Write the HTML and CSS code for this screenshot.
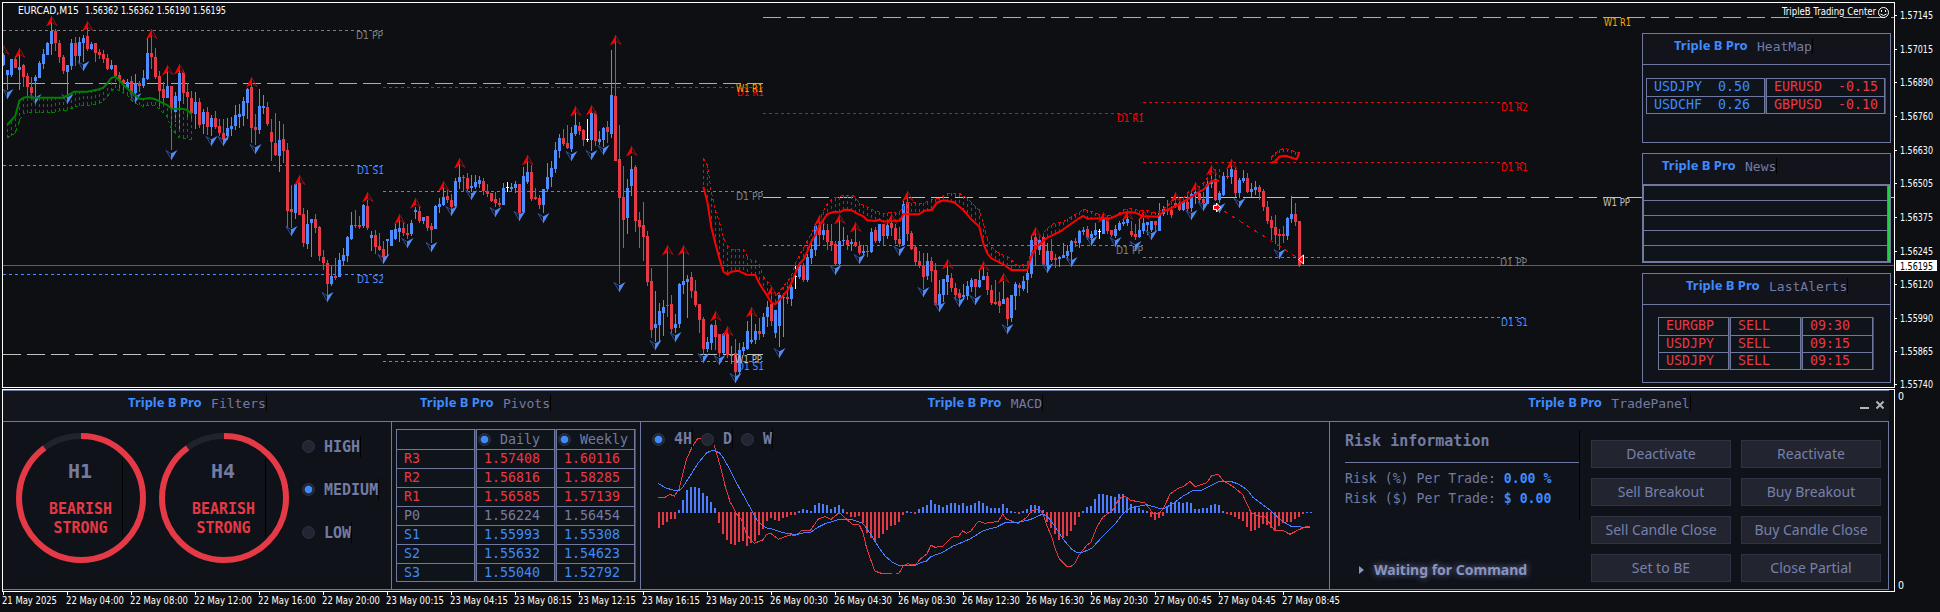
FILE: index.html
```html
<!DOCTYPE html>
<html lang="en">
<head>
  <meta charset="UTF-8" />
  <meta name="viewport" content="width=device-width, initial-scale=1.0">
  <title>TripleB Trading Center</title>
  <link rel="stylesheet" href="styles.css">
</head>
<body>

  <div class="chart-window">
    <svg id="priceChart" class="price-chart" width="1940" height="388"></svg>

    <div class="widgets">
      <div class="widget">
        <div class="widget-title heatmap-title"><b>Triple B Pro</b><span>HeatMap</span></div>
        <div class="grid heatmap">
          <div class="col blue"><div>USDJPY  0.50</div><div>USDCHF  0.26</div></div>
          <div class="col red"><div>EURUSD  -0.15</div><div>GBPUSD  -0.10</div></div>
        </div>
      </div>

      <div class="widget">
        <div class="widget-title news-title"><b>Triple B Pro</b><span>News</span></div>
        <div class="news"><div></div><div></div><div></div><div></div><div></div></div>
      </div>

      <div class="widget">
        <div class="widget-title alerts-title"><b>Triple B Pro</b><span>LastAlerts</span></div>
        <div class="grid alerts">
          <div class="col red"><div>EURGBP</div><div>USDJPY</div><div>USDJPY</div></div>
          <div class="col red"><div>SELL</div><div>SELL</div><div>SELL</div></div>
          <div class="col red"><div>09:30</div><div>09:15</div><div>09:15</div></div>
        </div>
      </div>
    </div>
  </div>

  <div class="lower">
    <div class="sub-window">
      <section class="panel filters">
        <h2><b>Triple B Pro</b><span>Filters</span></h2>
        <div class="panel-body">
          <div class="gauge">
            <svg width="130" height="130" viewBox="0 0 130 130">
              <circle class="track" cx="65" cy="65" r="62" />
              <circle class="value" cx="65" cy="65" r="62" pathLength="100" stroke-dasharray="90 10" transform="rotate(-90 65 65)" />
            </svg>
            <div class="gauge-text"><strong>H1</strong><p>BEARISH<br>STRONG</p></div>
          </div>
          <div class="gauge">
            <svg width="130" height="130" viewBox="0 0 130 130">
              <circle class="track" cx="65" cy="65" r="62" />
              <circle class="value" cx="65" cy="65" r="62" pathLength="100" stroke-dasharray="90 10" transform="rotate(-90 65 65)" />
            </svg>
            <div class="gauge-text"><strong>H4</strong><p>BEARISH<br>STRONG</p></div>
          </div>
          <div class="levels">
            <label class="choice"><i class="radio"></i><span>HIGH</span></label>
            <label class="choice"><i class="radio on"></i><span>MEDIUM</span></label>
            <label class="choice"><i class="radio"></i><span>LOW</span></label>
          </div>
        </div>
      </section>

      <section class="panel pivots">
        <h2><b>Triple B Pro</b><span>Pivots</span></h2>
        <div class="panel-body">
          <div class="grid pivot-table">
            <div class="col">
              <div></div>
              <div class="red">R3</div><div class="red">R2</div><div class="red">R1</div>
              <div>P0</div>
              <div class="blue">S1</div><div class="blue">S2</div><div class="blue">S3</div>
            </div>
            <div class="col">
              <div class="head"><i class="radio on"></i>Daily</div>
              <div class="red">1.57408</div><div class="red">1.56816</div><div class="red">1.56585</div>
              <div>1.56224</div>
              <div class="blue">1.55993</div><div class="blue">1.55632</div><div class="blue">1.55040</div>
            </div>
            <div class="col">
              <div class="head"><i class="radio on"></i>Weekly</div>
              <div class="red">1.60116</div><div class="red">1.58285</div><div class="red">1.57139</div>
              <div>1.56454</div>
              <div class="blue">1.55308</div><div class="blue">1.54623</div><div class="blue">1.52792</div>
            </div>
          </div>
        </div>
      </section>

      <section class="panel macd">
        <h2><b>Triple B Pro</b><span>MACD</span></h2>
        <div class="panel-body">
          <svg id="macdChart" width="688" height="167" viewBox="641 422 688 167"></svg>
          <div class="periods">
            <label class="choice"><i class="radio on"></i><span>4H</span></label>
            <label class="choice"><i class="radio"></i><span>D</span></label>
            <label class="choice"><i class="radio"></i><span>W</span></label>
          </div>
        </div>
      </section>

      <section class="panel trade">
        <h2><b>Triple B Pro</b><span>TradePanel</span>
          <svg class="window-buttons" width="26" height="12" viewBox="0 0 26 12">
            <path d="M0 9h9M16.500 2.500l7 7M23.500 2.500l-7 7" />
          </svg>
        </h2>
        <div class="panel-body">
          <div class="risk">
            <div class="risk-box">
              <h3>Risk information</h3>
              <p>Risk (%) Per Trade: <b>0.00 %</b></p>
              <p>Risk ($) Per Trade: <b>$ 0.00</b></p>
            </div>
            <div class="status"><i></i>Waiting for Command</div>
          </div>
          <div class="actions">
            <button>Deactivate</button><button>Reactivate</button>
            <button>Sell Breakout</button><button>Buy Breakout</button>
            <button>Sell Candle Close</button><button>Buy Candle Close</button>
            <button>Set to BE</button><button>Close Partial</button>
          </div>
        </div>
      </section>
    </div>
    <div class="sub-scale"><span>0</span><span>0</span></div>
  </div>

  <svg id="timeAxis" class="time-axis" width="1940" height="20"></svg>

  <script src="chart.js"></script>
</body>
</html>
```
FILE: styles.css
```css
* {
  box-sizing: border-box;
}

body {
  margin: 0;
  width: 1940px;
  height: 612px;
  overflow: hidden;
  background-color: #0e0f13;
  color: #737ba3;
  font-family: "Noto Sans", "Open Sans", sans-serif;
}

svg {
  display: block;
}

.red {
  color: #e63946;
}

.blue {
  color: #3d8bfd;
}

/* main chart */
.chart-window {
  position: relative;
  height: 389px;
}

.price-chart {
  overflow: visible;
}

.price-chart text,
.time-axis text {
  font-family: "DejaVu Sans Condensed", "DejaVu Sans", sans-serif;
  font-size: 10.5px;
}

.widgets {
  position: absolute;
  top: 33px;
  left: 1642px;
  width: 249px;
  display: flex;
  flex-direction: column;
  gap: 10px;
}

.widget {
  height: 110px;
  border: 1px solid #7078a0;
  background-color: #11131a;
}

.widget-title {
  display: flex;
  align-items: flex-start;
  height: 31px;
  padding-top: 3px;
  border-bottom: 1px solid #7078a0;
  background-color: #12131b;
}

.heatmap-title {
  padding-left: 31px;
}

.news-title {
  padding-left: 19px;
}

.alerts-title {
  padding-left: 43px;
}

.widget-title b,
.panel h2 b {
  width: 83px;
  font-size: 13px;
  font-weight: 700;
  line-height: 17px;
  color: #3d8bfd;
}

.widget-title span,
.panel h2 span {
  height: 16px;
  margin-top: 1px;
  border-right: 1px solid #000;
  font-family: "DejaVu Sans Mono", monospace;
  font-size: 13px;
  font-weight: 400;
  line-height: 17px;
}

/* tables made of separate bordered columns */
.grid {
  display: flex;
  gap: 1px;
  font-family: "DejaVu Sans Mono", monospace;
  font-size: 13.3px;
}

.col {
  border: 1px solid #7078a0;
  box-shadow: 1px 0 0 #1d6b34;
  background-color: #0f131a;
}

.col div {
  height: 17px;
  padding-left: 7px;
  line-height: 16px;
  white-space: pre;
}

.col div + div {
  border-top: 1px solid #7078a0;
}

.heatmap {
  margin: 13px 0 0 3px;
}

.heatmap .col {
  width: 119px;
}

.alerts {
  margin: 12px 0 0 15px;
}

.alerts .col {
  width: 71px;
}

.news {
  margin-top: 0;
  width: 247px;
  border: 1px solid #7078a0;
  border-right: 2px solid #1fd43a;
  background-color: #0f131a;
}

.news div {
  height: 15px;
  border-bottom: 1px solid #7078a0;
  border-right: 1px solid #7078a0;
}

.news div:last-child {
  border-bottom: none;
}

/* indicator window */
.lower {
  display: flex;
  height: 203px;
}

.sub-window {
  display: flex;
  width: 1893px;
  margin-left: 2px;
  border: 1px solid #fff;
}

.sub-scale {
  display: flex;
  flex-direction: column;
  justify-content: space-between;
  padding: 1px 0 0 3px;
  font-family: "DejaVu Sans Condensed", "DejaVu Sans", sans-serif;
  font-size: 10.5px;
  line-height: 13px;
  color: #fff;
}

.panel {
  height: 200px;
  border-top: 1px solid #7078a0;
  background-color: #0f1219;
}

.panel h2 {
  position: relative;
  display: flex;
  justify-content: center;
  height: 31px;
  margin: 0;
  padding-top: 3px;
  border-bottom: 1px solid #7078a0;
  background-color: #12151c;
}

.panel-body {
  display: flex;
  height: 168px;
  border-right: 1px solid #7078a0;
  border-bottom: 1px solid #7078a0;
}

.filters {
  width: 389px;
}

.pivots {
  width: 249px;
}

.macd {
  width: 689px;
}

.trade {
  width: 559px;
}

.pivots h2 {
  justify-content: flex-start;
  padding-left: 28px;
}

/* filters */
.filters .panel-body {
  padding: 11px 0 0 13px;
}

.gauge {
  position: relative;
  margin-right: 13px;
}

.gauge circle {
  fill: none;
  stroke-width: 6;
}

.gauge .track {
  stroke: #20232d;
}

.gauge .value {
  stroke: #e63946;
}

.gauge-text {
  position: absolute;
  top: 26px;
  left: 22px;
  width: 85px;
  height: 78px;
  border-right: 1px solid #000;
  text-align: center;
  font-family: "DejaVu Sans Mono", monospace;
  font-weight: 700;
}

.gauge-text strong {
  display: block;
  font-size: 20px;
  line-height: 24px;
}

.gauge-text p {
  margin: 17px 0 0 1px;
  color: #e63946;
  font-size: 15px;
  line-height: 19px;
}

.levels {
  display: flex;
  flex-direction: column;
  gap: 23px;
  margin-top: 3px;
}

.choice {
  display: flex;
  align-items: center;
  height: 20px;
  font-family: "DejaVu Sans Mono", monospace;
  font-size: 15px;
  font-weight: 700;
}

.choice span {
  margin-left: 9px;
  border-right: 1px solid #000;
  line-height: 20px;
}

.levels .choice span {
  padding-top: 1px;
}

.radio {
  display: inline-block;
  width: 13px;
  height: 13px;
  border: 1px solid #2e3242;
  border-radius: 50%;
  background-color: #232632;
}

.radio.on {
  background-image: radial-gradient(circle, #3d8bfd 3.4px, transparent 4.2px);
}

/* pivots */
.pivot-table {
  margin: 7px 0 0 4px;
  height: 153px;
}

.pivot-table .col {
  width: 79px;
}

.pivot-table .col div {
  height: 19px;
  line-height: 17px;
}

.pivot-table .col .head {
  display: flex;
  align-items: center;
  gap: 9px;
  padding-left: 1px;
}

/* macd */
.macd .panel-body {
  position: relative;
}

.periods {
  position: absolute;
  top: 7px;
  left: 11px;
  display: flex;
  gap: 8px;
}

/* trade panel */
.window-buttons {
  position: absolute;
  top: 8px;
  right: 3px;
  fill: none;
  stroke: #b5b5b5;
  stroke-width: 2;
}

.risk {
  width: 261px;
  padding: 8px 0 0 15px;
}

.risk-box {
  width: 235px;
  height: 90px;
  border-right: 1px solid #000;
  font-family: "DejaVu Sans Mono", monospace;
}

.risk h3 {
  height: 33px;
  margin: 0 0 6px;
  border-bottom: 1px solid #7078a0;
  font-size: 15px;
  line-height: 22px;
}

.risk p {
  margin: 0;
  font-size: 13.2px;
  line-height: 20px;
}

.risk p b {
  color: #3d8bfd;
}

.status {
  display: flex;
  align-items: center;
  margin: 38px 0 0 14px;
  color: #8b93bf;
  font-size: 14px;
  font-weight: 700;
  line-height: 24px;
  text-shadow: 0 0 7px #7078a0;
}

.status i {
  margin-right: 10px;
  border: 4px solid transparent;
  border-left: 5px solid #8b93bf;
  border-right: none;
}

.actions {
  display: grid;
  grid-template-columns: 140px 140px;
  grid-auto-rows: 28px;
  gap: 10px;
  padding-top: 18px;
}

.actions button {
  padding: 0 0 2px;
  border: 1px solid #2e3242;
  background-color: #22252f;
  color: #7780ab;
  font-family: "Noto Sans", "Open Sans", sans-serif;
  font-size: 14px;
}
```
FILE: chart.js
```js
const SVG_NS = "http://www.w3.org/2000/svg";

const BLUE = "#4d8dff";
const RED = "#e63946";

function add(parent, tag, attrs, text) {
  const el = document.createElementNS(SVG_NS, tag);
  for (const key in attrs) el.setAttribute(key, attrs[key]);
  if (text) el.textContent = text;
  parent.appendChild(el);
  return el;
}

function label(parent, text, x, y, width, fill) {
  add(parent, "text", { x: x, y: y, fill: fill, textLength: width, lengthAdjust: "spacingAndGlyphs" }, text);
}

const chart = document.getElementById("priceChart");

// colour, high, body top, body bottom, low
const candles = `
b 53 55 65 66,b 70 70 75 90,b 59 59 75 77,r 56 59 68 68,b 53 67 70 90,r 64 65 77 87,r 73 76 87 97,r 77 87 93 97,b 75 77 81 97,b 61 63 78 78,
b 49 54 64 69,b 42 43 55 55,b 22 31 44 55,r 29 31 43 51,r 40 43 57 63,r 55 57 71 74,b 65 65 72 96,b 39 43 66 70,r 37 43 56 66,b 37 42 56 64,
b 35 38 43 62,r 28 36 49 51,b 42 44 49 50,r 43 43 53 62,r 49 52 55 59,r 50 54 59 63,r 54 58 69 70,b 60 65 69 70,r 65 65 76 77,r 72 75 81 90,
r 79 80 84 91,b 79 82 88 88,r 76 81 93 97,b 74 83 93 97,r 81 83 86 92,b 70 78 86 88,b 38 53 79 80,r 35 53 57 69,r 48 57 77 79,r 71 76 91 106,
r 82 89 98 104,b 70 86 98 98,r 86 86 108 150,b 92 96 112 122,b 70 73 101 130,r 70 72 93 104,r 83 92 97 120,r 91 98 113 119,b 92 102 114 129,r 98 102 125 128,
b 109 112 124 134,r 107 112 127 135,b 115 118 127 136,r 111 118 127 129,r 119 126 133 136,r 119 133 139 140,b 118 128 136 140,b 117 126 129 136,b 105 115 126 130,b 104 114 117 128,
b 97 101 116 126,b 88 89 103 119,r 84 87 128 143,r 114 127 130 145,b 89 106 130 134,b 95 106 108 114,r 102 107 124 126,r 119 132 142 161,r 113 143 155 156,b 121 140 156 172,
r 124 139 151 163,r 143 150 211 228,r 185 209 212 228,b 184 184 213 219,r 180 183 215 215,r 208 214 243 247,b 210 224 244 249,b 219 219 223 257,r 214 219 228 233,r 226 227 256 261,
r 250 257 263 270,r 260 263 284 295,b 266 276 284 286,r 258 276 278 280,b 253 260 277 277,b 248 255 261 266,b 236 237 256 262,b 212 225 239 240,r 210 225 226 228,r 216 225 227 229,
b 204 205 226 228,r 200 206 228 230,b 231 235 238 251,r 230 235 247 254,r 233 246 250 251,r 241 249 257 259,b 239 239 241 256,b 230 230 246 246,b 224 229 239 240,b 220 228 232 242,
r 223 228 233 236,r 224 233 235 239,b 220 223 234 236,b 207 210 212 219,r 207 211 221 223,b 217 217 221 224,r 216 216 228 231,r 223 226 230 243,b 205 206 229 229,b 198 204 207 213,
b 187 197 205 206,r 189 196 200 203,r 194 200 207 209,b 178 181 206 207,b 164 177 182 189,r 175 177 178 192,r 173 178 189 192,b 175 186 188 192,b 175 182 187 189,b 176 180 184 188,
r 178 181 191 195,r 184 191 194 197,r 193 193 201 202,r 192 199 203 207,r 198 203 205 207,b 183 188 205 205,w 182 187 188 192,b 183 187 189 191,b 181 184 188 193,r 184 184 213 215,
b 167 176 212 214,b 162 172 182 184,r 165 172 199 201,r 188 197 199 200,r 195 198 205 209,b 189 189 205 213,b 163 177 189 191,b 161 168 177 187,b 142 150 169 173,b 134 138 151 158,
r 129 138 144 146,r 125 143 148 149,b 127 133 149 152,b 112 125 134 136,r 122 126 131 135,r 129 130 140 146,w 119 139 140 142,b 111 113 140 151,r 111 113 141 146,b 131 139 142 145,
b 127 128 140 147,r 121 127 132 143,b 50 95 134 138,r 41 96 161 161,r 125 159 198 284,r 166 197 220 248,b 179 188 218 234,b 156 169 186 196,r 165 167 221 232,r 212 220 227 248,
r 202 225 237 261,r 231 236 282 286,r 268 281 330 338,b 291 324 328 342,b 303 311 325 343,b 300 307 313 336,r 252 305 306 317,r 295 304 329 333,b 314 324 328 333,b 283 284 324 328,
b 252 281 285 294,b 275 279 282 318,r 272 277 291 298,r 280 291 305 307,r 304 304 320 333,r 317 319 349 355,b 337 342 349 352,b 324 325 343 350,r 320 325 337 350,r 334 334 353 357,
b 333 334 353 354,r 332 334 355 358,b 346 355 356 364,r 339 353 372 376,b 343 350 372 374,b 342 347 351 355,b 321 331 349 350,b 313 340 342 344,b 324 331 340 344,r 318 331 334 340,
b 313 317 334 337,b 301 307 317 327,r 296 304 321 326,b 310 310 333 338,b 293 295 326 347,b 296 297 298 337,r 286 297 299 304,b 285 287 299 306,w 265 276 277 289,b 263 265 277 279,
r 263 265 280 282,b 254 257 280 282,b 243 249 258 264,b 224 226 250 256,r 222 225 235 245,b 221 230 235 240,r 224 230 242 250,r 224 241 245 251,r 241 244 264 266,b 219 241 264 265,
b 227 240 241 245,r 235 240 245 250,b 239 242 244 251,r 228 242 246 247,r 241 246 253 255,b 245 251 253 255,r 245 251 252 257,b 228 232 252 253,r 227 230 241 243,b 224 224 241 243,
r 224 224 236 245,b 223 225 236 239,r 220 223 228 236,r 224 228 240 244,r 227 239 244 247,b 201 204 245 246,r 197 202 234 241,r 231 233 249 250,r 245 247 262 266,r 251 261 266 268,
r 253 266 277 289,b 253 261 276 280,r 257 261 271 282,r 263 270 305 306,b 280 294 305 307,b 279 279 295 302,b 265 275 282 295,r 273 278 288 292,r 283 288 295 300,r 289 293 298 300,
b 284 295 297 300,b 281 286 296 300,b 278 280 287 292,r 279 279 287 297,b 270 280 287 288,b 267 276 280 280,r 272 276 290 295,r 285 290 303 305,r 280 302 304 305,r 292 301 306 313,
b 281 299 304 304,r 297 298 319 326,b 295 295 318 322,b 282 284 296 310,r 283 285 288 296,b 276 281 289 291,b 268 273 280 293,b 235 240 274 278,r 234 237 249 266,b 237 240 250 255,
r 236 237 265 266,b 243 251 266 268,r 239 251 260 262,r 254 258 260 268,b 256 257 259 267,b 243 255 258 258,b 245 251 256 261,b 240 241 252 260,r 238 241 243 247,b 230 231 243 248,
b 227 230 232 235,r 226 229 238 240,b 231 234 238 240,b 223 230 235 236,w 229 231 232 239,b 217 219 234 234,r 217 218 231 234,r 230 230 235 237,b 225 229 236 238,b 221 223 230 231,
b 219 222 224 226,b 216 219 223 226,r 221 231 235 237,r 224 234 237 240,b 218 230 237 238,b 218 223 231 234,b 222 222 225 235,b 221 221 230 232,r 221 221 225 231,b 203 213 231 231,
b 206 209 214 216,r 200 209 211 215,r 206 210 215 218,r 198 203 206 208,r 202 203 210 211,b 197 202 210 211,r 196 202 209 212,b 191 194 208 212,b 188 192 195 204,r 191 193 200 203,
r 192 199 203 204,b 180 184 204 204,b 175 181 184 188,r 170 179 200 201,b 191 193 200 203,b 172 176 195 196,r 169 176 177 179,b 165 169 177 184,r 168 170 193 197,b 178 180 193 198,
b 170 178 181 183,r 173 178 192 193,b 183 189 192 197,b 181 187 190 195,r 185 187 192 200,r 189 191 207 211,r 201 207 221 224,r 216 220 228 240,r 215 227 235 244,r 229 234 236 250,
r 226 234 236 243,b 217 218 236 240,b 196 214 219 223,r 203 214 222 226,r 221 221 266 267`.trim().split(/,\s*/);

// fractal arrows: [candle index, y]
const upArrows = [[0,45],[4,48],[12,16],[21,21],[37,29],[41,65],[44,64],[62,77],[74,175],[91,192],[99,214],[103,198],[110,181],[114,158],
  [131,155],[143,106],[147,105],[153,35],[157,146],[166,245],[170,245],[178,311],[181,326],[187,307],[192,286],[204,215],[209,214],[213,222],
  [222,214],[226,191],[236,259],[245,261],[250,273],[258,227],[275,212],[281,210],[285,210],[293,192],[298,182],[302,165],[307,159]];
const downArrows = [[1,89],[8,94],[16,94],[20,61],[33,93],[42,150],[52,136],[55,136],[63,144],[72,226],[81,292],[95,254],[101,238],[107,242],
  [112,206],[117,190],[123,207],[129,211],[135,213],[142,151],[147,150],[150,145],[154,282],[163,340],[168,332],[175,353],[179,355],[183,373],
  [194,348],[208,265],[214,254],[224,246],[230,287],[234,302],[239,297],[243,295],[251,324],[261,263],[267,257],[272,236],[278,237],[283,241],
  [287,230],[297,210],[300,201],[304,203],[309,198],[319,249]];

const GRAY = "#808080", SILVER = "#c0c0c0", ORANGE = "#ffa500", PURE_RED = "#ff0000";

// x1, x2, y, colour, dash
const levels = [
  [3, 383, 30, GRAY, "3 3"], [3, 763, 83, ORANGE, "18 6"], [3, 383, 165, BLUE, "3 3"], [3, 383, 274, BLUE, "3 3"],
  [3, 763, 354, SILVER, "18 6"], [383, 763, 87, PURE_RED, "3 3"], [383, 763, 191, GRAY, "3 3"], [383, 763, 361, BLUE, "3 3"],
  [763, 1894, 17, ORANGE, "18 6"], [763, 1894, 197, SILVER, "18 6"], [763, 1143, 113, PURE_RED, "3 3"], [763, 1143, 245, GRAY, "3 3"],
  [1143, 1525, 102, PURE_RED, "3 3"], [1143, 1525, 162, PURE_RED, "3 3"], [1143, 1525, 257, GRAY, "3 3"], [1143, 1525, 317, BLUE, "3 3"]
];
const levelLabels = [
  ["D1 PP", 356, 39, GRAY], ["D1 S1", 357, 174, BLUE], ["D1 S2", 357, 283, BLUE], ["D1 R1", 737, 96, PURE_RED], ["W1 R1", 736, 92, ORANGE],
  ["D1 PP", 736, 200, GRAY], ["D1 S1", 737, 370, BLUE], ["W1 PP", 735, 363, SILVER], ["D1 R1", 1117, 122, PURE_RED], ["D1 PP", 1116, 254, GRAY],
  ["W1 R1", 1604, 26, ORANGE], ["W1 PP", 1603, 206, SILVER], ["D1 R2", 1501, 111, PURE_RED], ["D1 R1", 1501, 171, PURE_RED],
  ["D1 PP", 1500, 266, GRAY], ["D1 S1", 1501, 326, BLUE]
];

// trend bands: pairs are in thirds of a pixel from the origin
const bands = [
  { color: "#008000", ox: 0, oy: 0,
    line: [22,374,46,348,58,302,70,294,82,290,94,293,190,293,214,280,222,275,262,275,298,268,310,263,322,250,334,234,346,230,358,240,370,254,394,276,406,285,418,296,430,297,450,294,466,298,490,310,502,315,514,326,550,327,562,330,574,342],
    edge: [22,413,46,400,58,365,70,340,82,338,94,337,154,339,178,333,202,331,226,320,240,316,274,315,298,310,310,303,322,290,334,273,346,264,358,272,382,285,394,300,406,310,430,320,442,315,466,315,490,340,502,350,514,385,526,400,538,413,562,415,574,420] },
  { color: "#ff0000", ox: 680, oy: 120,
    line: [70,200,82,245,94,322,106,370,118,415,130,455,142,463,154,455,174,452,200,464,226,465,238,490,262,528,274,548,286,552,298,540,322,512,334,490,346,460,358,432,370,420,382,395,394,365,406,345,418,318,430,300,442,282,460,276,482,275,494,269,514,270,530,280,550,289,562,301,586,303,598,299,610,305,634,302,660,302,670,283,718,282,734,272,756,269,770,248,790,241,802,243,822,247,850,270,874,298,898,320,910,370,922,400,934,415,970,433,994,450,1042,450,1054,410,1070,380,1090,363,1102,353,1140,335,1198,294,1210,288,1222,296,1294,294,1320,282,1342,276,1366,278,1390,289,1432,290,1450,275,1474,264,1498,253,1522,238,1546,223,1558,215,1570,210,1582,196,1594,184,1618,182],
    edge: [70,115,82,135,94,215,106,270,118,305,130,350,142,378,154,387,190,388,202,410,214,420,226,421,238,435,250,470,262,485,274,500,290,525,310,500,334,470,346,430,370,385,394,340,418,300,430,275,442,250,460,235,490,226,520,227,540,250,574,268,610,281,634,277,655,280,682,247,730,250,754,239,778,235,802,220,840,221,862,235,898,270,910,310,922,355,934,380,950,395,990,415,1010,436,1040,434,1054,400,1078,350,1102,325,1120,312,1150,305,1175,290,1198,277,1210,268,1240,275,1255,282,1280,285,1305,290,1330,270,1355,265,1380,273,1400,270,1420,278,1438,273,1460,260,1480,240,1510,235,1530,210,1546,205,1570,190,1585,170,1600,150,1618,148] },
  { color: "#ff0000", ox: 1000, oy: 100,
    line: [814,189,826,184,838,170,854,167,870,172,890,178,898,158],
    edge: [814,172,826,160,838,150,854,145,878,152,890,160,898,155] }
];

function valueAt(points, x) {
  for (let i = 2; i < points.length; i += 2) {
    if (x <= points[i]) {
      const t = (x - points[i - 2]) / (points[i] - points[i - 2]);
      return points[i - 1] + t * (points[i + 1] - points[i - 1]);
    }
  }
  return points[points.length - 1];
}

function toPoints(list, ox, oy) {
  const out = [];
  for (let i = 0; i < list.length; i += 2) {
    out.push((ox + list[i] / 3).toFixed(1) + "," + (oy + list[i + 1] / 3).toFixed(1));
  }
  return out.join(" ");
}

// Frame, bid line, pivot levels
add(chart, "rect", { x: 2.5, y: 2.5, width: 1892, height: 385, fill: "none", stroke: "#fff" });
add(chart, "path", { d: "M3 265.5H1894", stroke: "#56626f" });
levels.forEach(([x1, x2, y, color, dash]) => {
  add(chart, "path", { d: `M${x1} ${y + 0.5}H${x2}`, stroke: color, "stroke-dasharray": dash });
});

// Candles
const crisp = add(chart, "g", { "shape-rendering": "crispEdges" });
candles.forEach((row, i) => {
  const [c, high, top, bottom, low] = row.split(" ");
  const color = { b: BLUE, r: RED, w: "#fff" }[c];
  const x = 3 + i * 4;
  add(crisp, "rect", { x: x, y: high, width: 1, height: low - high, fill: color });
  // the first candle is clipped by the frame
  add(crisp, "rect", { x: i ? x - 1 : x, y: top, width: i ? 3 : 2, height: bottom - top, fill: color });
});

upArrows.forEach(([i, y]) => {
  const x = 3.5 + i * 4;
  const left = i ? 6 : 0;
  add(chart, "path", { d: `M${x} ${y + 0.5}l5.500 9-5.500-3.500z`, fill: "none", stroke: "#8f1216" });
  add(chart, "path", { d: `M${x + 0.5} ${y - 0.5}v7.500l-${left} 3.500z`, fill: "#ff0000" });
});
downArrows.forEach(([i, y]) => {
  const x = 3.5 + i * 4;
  add(chart, "path", { d: `M${x} ${y + 9.5}l-${i === 1 ? 4 : 5.5}-9 5.500 3.500z`, fill: "none", stroke: "#2b4f9a" });
  add(chart, "path", { d: `M${x - 0.5} ${y + 10.5}v-7l6.500-3.500z`, fill: BLUE });
});

// Trend bands
bands.forEach(({ color, ox, oy, line, edge }) => {
  for (let x = line[0]; x <= line[line.length - 2]; x += 12) {
    add(crisp, "path", {
      d: `M${ox + (x - 1) / 3 + 0.5} ${oy + valueAt(edge, x) / 3}V${oy + valueAt(line, x) / 3}`,
      stroke: color, "stroke-dasharray": "3 3"
    });
  }
  add(crisp, "polyline", { points: toPoints(edge, ox, oy), fill: "none", stroke: color, "stroke-dasharray": "3 3" });
  add(chart, "polyline", { points: toPoints(line, ox, oy), fill: "none", stroke: color, "stroke-width": 2 });
});

// Last trade
add(crisp, "path", { d: "M1224 211L1298 258", stroke: "#ff0000", "stroke-dasharray": "4 5" });
add(chart, "path", { d: "M1213.5 205.5h3v-2.500l4 4.500-4 4.500v-2.500h-3z", fill: "#ff0000", stroke: "#fff" });
add(chart, "path", { d: "M1303.500 255v9l-5-4.500z", fill: "#ff0000", stroke: "#fff" });

levelLabels.forEach(([text, x, y, color]) => label(chart, text, x, y, 27, color));
label(chart, "EURCAD,M15", 18, 14, 61, "#fff");
label(chart, "1.56362 1.56362 1.56190 1.56195", 85, 14, 141, "#fff");
label(chart, "TripleB Trading Center", 1782, 15, 94, "#fff");
add(chart, "circle", { cx: 1883.5, cy: 12.5, r: 5, fill: "none", stroke: "#fff" });
add(chart, "path", { d: "M1881.500 10v2M1885.500 10v2M1880.500 14q3 3 6 0", fill: "none", stroke: "#fff" });

// Price scale
[["1.57145", 15], ["1.57015", 49], ["1.56890", 82], ["1.56760", 116], ["1.56630", 150], ["1.56505", 183], ["1.56375", 217],
 ["1.56245", 251], ["1.56120", 284], ["1.55990", 318], ["1.55865", 351], ["1.55740", 384]].forEach(([text, y]) => {
  add(chart, "path", { d: `M1895 ${y + 0.5}h2`, stroke: "#fff" });
  label(chart, text, 1900, y + 4, 33, "#fff");
});
add(chart, "rect", { x: 1896, y: 260, width: 41, height: 11, fill: "#fff" });
label(chart, "1.56195", 1900, 269.5, 33, "#000");

// MACD
const macd = document.getElementById("macdChart");
const bars = [-16,-13,-10,-7,-7,3,13,23,26,26,25,20,17,11,5,-11,-22,-28,-32,-33,-30,-29,-34,-31,-29,-23,-17,-9,-6,-8,-9,-6,-5,-3,-3,2,4,3,2,8,10,9,8,4,6,8,4,
  -2,-5,-5,-4,-11,-21,-26,-30,-26,-22,-18,-14,-13,-10,-3,2,1,-2,4,6,8,13,9,8,6,8,10,10,8,10,7,8,10,12,10,7,5,5,5,9,5,2,1,-2,2,4,8,8,7,3,
  -10,-16,-22,-28,-26,-24,-19,-13,-5,2,6,7,14,19,19,18,17,16,19,19,15,9,7,5,3,2,-5,-8,-6,-4,7,11,11,11,10,11,10,4,4,5,5,8,9,8,2,
  -2,-3,-5,-7,-9,-15,-19,-18,-16,-12,-13,-16,-19,-14,-11,-10,-10,-7,-5,-2,1,1];
const signal = [54,190,78,204,102,211,118,211,128,202,150,168,174,130,200,98,220,91,238,98,250,113,270,150,290,190,310,225,330,262,345,292,360,310,378,323,400,328,430,338,470,344,490,339,512,337,530,324,555,311,580,304,597,298,633,298,655,305,668,310,680,325,697,350,715,380,735,408,755,425,775,436,825,436,845,427,860,423,873,410,910,396,940,378,990,357,1030,332,1070,321,1095,308,1137,306,1170,299,1208,282,1222,290,1235,305,1250,328,1270,358,1295,388,1310,397,1328,397,1355,385,1380,358,1425,312,1450,280,1472,263,1520,254,1568,268,1600,250,1630,228,1660,211,1685,211,1735,185,1775,185,1795,192,1820,208,1840,233,1890,270,1925,302,1955,320,2010,322];
const fast = [
  [54,232,75,232,90,223,103,229,118,205,140,115,160,75,172,57,186,55],
  [223,76,240,135,256,200,270,245,292,285,304,298,320,345,343,370,368,360,380,343,392,340,416,358,440,348,455,344,465,348,485,332,512,330,535,297,555,290,573,298,598,278,620,298,636,312,657,314,668,335,680,385,704,453,724,460,755,460],
  [768,460,777,460,790,437,803,431,825,435,845,413,860,403,873,376,885,382,910,378,935,352,957,348,968,333,980,340,993,333,1015,304,1035,310,1075,304,1088,282,1100,298,1134,310,1160,293,1172,275,1188,268,1200,270,1208,280,1220,315,1235,350,1245,385,1257,415,1280,439,1293,439,1305,430,1317,405,1340,376,1353,366,1370,322,1388,292,1420,268,1435,240,1450,227,1460,232,1472,241,1515,249,1530,268,1540,282,1560,278,1572,262,1590,222,1615,205,1630,200,1650,184,1665,200,1700,188,1715,167,1735,163,1750,182,1780,200,1808,224,1833,278,1853,288,1875,290,1903,330,1930,332,1950,343,1975,330,1995,321,2010,320]
];
const macdCrisp = add(macd, "g", { "shape-rendering": "crispEdges", fill: "none" });
bars.forEach((v, i) => {
  add(macdCrisp, "rect", { x: 658 + i * 4, y: v > 0 ? 513 - v : 512, width: 2, height: Math.abs(v), fill: v > 0 ? "#4d7dff" : RED });
});
fast.forEach(part => add(macdCrisp, "polyline", { points: toPoints(part, 640, 420), stroke: RED }));
add(macdCrisp, "polyline", { points: toPoints(signal, 640, 420), stroke: "#4d7dff" });

// Time scale
const timeAxis = document.getElementById("timeAxis");
["21 May 2025", "22 May 04:00", "22 May 08:00", "22 May 12:00", "22 May 16:00", "22 May 20:00", "23 May 00:15", "23 May 04:15",
 "23 May 08:15", "23 May 12:15", "23 May 16:15", "23 May 20:15", "26 May 00:30", "26 May 04:30", "26 May 08:30", "26 May 12:30",
 "26 May 16:30", "26 May 20:30", "27 May 00:45", "27 May 04:45", "27 May 08:45"].forEach((text, i) => {
  add(timeAxis, "path", { d: `M${3.5 + i * 64} 0v3`, stroke: "#fff" });
  label(timeAxis, text, 2 + i * 64, 12, i ? 58 : 55, "#fff");
});
```
